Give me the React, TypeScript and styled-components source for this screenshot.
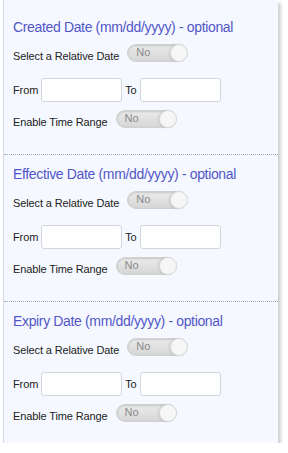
import styled, { createGlobalStyle } from 'styled-components';

const GlobalStyle = createGlobalStyle`
  html, body {
    margin: 0;
    padding: 0;
    background: #ffffff;
  }
  body {
    font-family: "Liberation Sans", Arial, sans-serif;
  }
`;

const Panel = styled.div`
  margin-left: 3px;
  width: 275px;
  padding-top: 8px;
  background: #f5f9ff;
  border-left: 1px solid #d6dbe3;
  box-shadow: 3px 3px 3px rgba(0, 0, 0, 0.18);
  box-sizing: border-box;
`;

const Section = styled.div`
  padding: 11px 0 25px 9px;
  border-bottom: 1px dotted #9aa6b6;

  &:last-child {
    border-bottom: none;
    padding-bottom: 20px;
  }
`;

const Title = styled.div`
  font-size: 14px;
  line-height: 16px;
  color: #5256c8;
  letter-spacing: -0.35px;
`;

const Row = styled.div<{ $top: number; $center?: boolean }>`
  display: flex;
  align-items: ${(p) => (p.$center ? 'center' : 'flex-start')};
  margin-top: ${(p) => p.$top}px;
`;

const Label = styled.span<{ $pad?: number }>`
  font-size: 11px;
  line-height: 13px;
  letter-spacing: -0.12px;
  color: #222;
  padding-top: ${(p) => p.$pad ?? 0}px;
  margin-right: ${(p) => (p.$pad ? 8 : 3)}px;
`;

const DateInput = styled.input<{ $w: number }>`
  width: ${(p) => p.$w}px;
  height: 24px;
  box-sizing: border-box;
  border: 1px solid #d3d6da;
  border-radius: 3px;
  background: #fff;
  padding: 0 4px;
  margin: 0;
  margin-right: 3px;
  outline: none;
`;

const Toggle = styled.div`
  position: relative;
  width: 61px;
  height: 18px;
  box-sizing: border-box;
  border-radius: 9px;
  border: 1px solid #d0d0d0;
  background: linear-gradient(#ebebeb, #d6d6d6);
  box-shadow: inset 0 1px 2px rgba(0, 0, 0, 0.15);
`;

const ToggleText = styled.span`
  position: absolute;
  left: 8px;
  top: 1px;
  font-size: 11px;
  line-height: 12px;
  color: #8a8a8a;
`;

const Knob = styled.span`
  position: absolute;
  right: -1px;
  top: -1px;
  width: 18px;
  height: 18px;
  border-radius: 50%;
  background: #f6f6f6;
  border: 1px solid #dcdcdc;
  box-sizing: border-box;
  box-shadow: -1px 0 2px rgba(0, 0, 0, 0.12);
`;

function Switch() {
  return (
    <Toggle>
      <ToggleText>No</ToggleText>
      <Knob />
    </Toggle>
  );
}

const sections = ['Created', 'Effective', 'Expiry'];

export default function App() {
  return (
    <>
      <GlobalStyle />
      <Panel>
        {sections.map((name) => (
          <Section key={name}>
            <Title>{name} Date (mm/dd/yyyy) - optional</Title>
            <Row $top={9}>
              <Label $pad={6}>Select a Relative Date</Label>
              <Switch />
            </Row>
            <Row $top={15} $center>
              <Label>From</Label>
              <DateInput $w={81} />
              <Label>To</Label>
              <DateInput $w={81} />
            </Row>
            <Row $top={8}>
              <Label $pad={6}>Enable Time Range</Label>
              <Switch />
            </Row>
          </Section>
        ))}
      </Panel>
    </>
  );
}
